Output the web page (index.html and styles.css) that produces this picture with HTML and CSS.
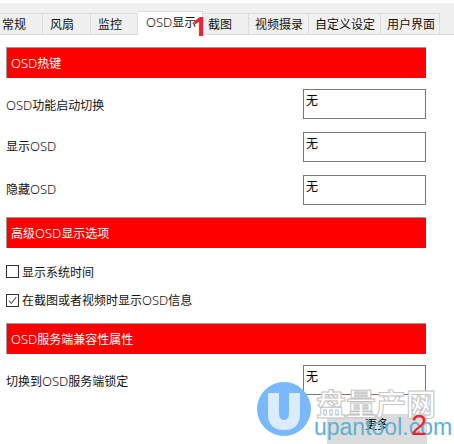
FILE: index.html
```
<!DOCTYPE html>
<html lang="zh">
<head>
<meta charset="utf-8">
<title>OSD</title>
<link rel="stylesheet" href="styles.css">
</head>
<body>
<div class="tabbar">
  <div class="tab t1">常规</div>
  <div class="tab t2">风扇</div>
  <div class="tab t3">监控</div>
  <div class="tab active"><span class="lat">OSD</span>显示<span class="mark m1">1</span></div>
  <div class="tab t5">截图</div>
  <div class="tab t6">视频摄录</div>
  <div class="tab t7">自定义设定</div>
  <div class="tab t8">用户界面</div>
</div>
<main class="panel">
  <h2 class="head"><span class="lat">OSD</span>热键</h2>
  <div class="row r1"><span class="label"><span class="lat">OSD</span>功能启动切换</span><div class="field">无</div></div>
  <div class="row r2"><span class="label">显示<span class="lat">OSD</span></span><div class="field">无</div></div>
  <div class="row r2"><span class="label">隐藏<span class="lat">OSD</span></span><div class="field">无</div></div>
  <h2 class="head h2">高级<span class="lat">OSD</span>显示选项</h2>
  <label class="check c1"><span class="box"></span>显示系统时间</label>
  <label class="check c2"><span class="box"><svg viewBox="0 0 13 13" width="11" height="11"><path d="M2 6.5 L5 10 L11 2.5" fill="none" stroke="#666" stroke-width="1.3"/></svg></span><span>在截图或者视频时显示<span class="lat">OSD</span>信息</span></label>
  <h2 class="head h3"><span class="lat">OSD</span>服务端兼容性属性</h2>
  <div class="row r4"><span class="label">切换到<span class="lat">OSD</span>服务端锁定</span><div class="field">无</div></div>
  <div class="foot"><button class="more">更多</button></div>
</main>
<div class="wm">
  <svg class="wm-u" viewBox="0 0 54 54" width="54" height="54">
    <circle cx="27" cy="27" r="27" fill="#78b8fb"/>
    <path d="M11 11 H22 V31 Q22 38 27 38 Q32 38 32 31 V11 H43 V32 Q43 48 27 48 Q11 48 11 32 Z" fill="#dcecff"/>
  </svg>
  <div class="wm-cn">盘量产网</div>
  <div class="wm-en">upantool.com</div>
</div>
<span class="mark m2">2</span>
</body>
</html>
```
FILE: styles.css
```
* { box-sizing: border-box; }
html, body { margin: 0; padding: 0; }
body {
  position: relative;
  width: 454px;
  height: 444px;
  overflow: hidden;
  background: #fff;
  font-family: "Noto Sans CJK SC", "Liberation Sans", sans-serif;
  font-size: 12px;
  font-weight: 400;
  color: #111;
}
.lat { font-family: "Noto Sans", "Liberation Sans", sans-serif; font-size: 13px; font-weight: 300; }
.tabbar {
  display: flex;
  align-items: flex-end;
  margin-top: 3px;
  background: #f0f0f0;
  border-bottom: 1px solid #dcdcdc;
  height: 32px;
}
.tab {
  height: 21px;
  line-height: 19px;
  text-align: left;
  padding-left: 7px;
  border: 1px solid #dcdcdc;
  border-left: 0;
  border-bottom: 0;
  white-space: nowrap;
  position: relative;
}
.t1 { width: 43px; padding-left: 2px; }
.t2 { width: 48px; }
.t3 { width: 47px; }
.active {
  width: 65px;
  height: 24px;
  margin-bottom: -1px;
  line-height: 20px;
  background: #fff;
  padding-left: 8px;
}
.t5 { width: 46px; padding-left: 5px; }
.t6 { width: 60px; padding-left: 6px; }
.t7 { width: 72px; padding-left: 6px; }
.t8 { width: 59px; padding-left: 6px; }
.mark {
  position: absolute;
  font-family: "Liberation Sans", sans-serif;
  font-weight: 400;
  color: #ee2233;
  line-height: 1;
}
.m1 { left: 54px; top: 0; font-family: "Open Sans", sans-serif; font-size: 27px; font-weight: 700; }
.m2 { left: 411px; top: 411px; font-size: 29px; }
.panel { padding: 12px 28px 0 6px; }
.head {
  margin: 0;
  height: 31px;
  line-height: 29px;
  padding-left: 4px;
  background: #f00;
  color: #fff;
  font-size: 12px;
  font-weight: 400;
  border-top: 1px solid #999;
  border-left: 1px solid #999;
  width: 420px;
}
.h2 { margin-top: 12px; }
.row {
  display: flex;
  justify-content: space-between;
  align-items: flex-start;
  width: 420px;
  margin-top: 13px;
}
.label { line-height: 18px; padding-top: 5px; }
.r1 { margin-top: 11px; }
.r1 .label { padding-top: 7px; }
.r4 { margin-top: 11px; }
.r4 .label { padding-top: 7px; }
.field {
  width: 123px;
  height: 30px;
  border: 1px solid #777;
  background: #fff;
  padding-left: 2px;
  line-height: 20px;
  color: #000;
}
.check {
  display: flex;
  align-items: center;
  gap: 3px;
  height: 18px;
}
.c1 { margin-top: 14px; }
.c2 { margin-top: 11px; }
.box {
  display: flex;
  align-items: center;
  justify-content: center;
  width: 13px;
  height: 13px;
  border: 1px solid #333;
  background: #fff;
}
.h3 { margin-top: 14px; }
.foot { display: flex; justify-content: flex-end; width: 421px; margin-top: 19px; }
.more {
  width: 100px;
  height: 30px;
  padding: 0 0 12px;
  border: 0;
  background: #dcdcdc;
  font: inherit;
  color: #000;
}
.wm { position: absolute; left: 0; top: 0; }
.wm-u { position: absolute; left: 257px; top: 382px; }
.wm-cn {
  position: absolute;
  left: 316px;
  top: 385px;
  width: 120px;
  font-size: 30px;
  line-height: 34px;
  font-weight: 700;
  white-space: nowrap;
  color: #fff;
  -webkit-text-stroke: 1px #c4c4c4;
}
.wm-en {
  position: absolute;
  left: 314px;
  top: 415px;
  font-family: "Liberation Sans", sans-serif;
  font-weight: 400;
  font-size: 23px;
  line-height: 24px;
  white-space: nowrap;
  color: #5cb0d4;
}
```
